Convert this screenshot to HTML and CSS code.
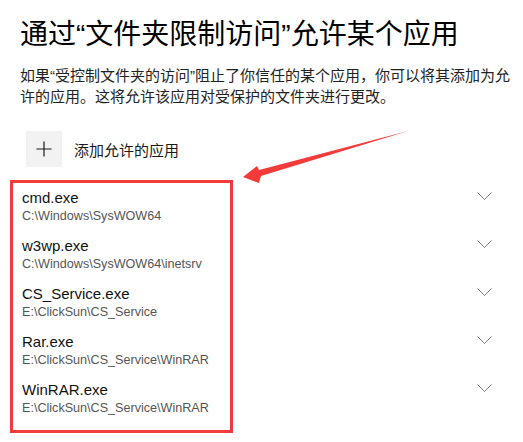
FILE: index.html
```html
<!DOCTYPE html>
<html lang="zh-CN">
<head>
    <meta charset="UTF-8">
    <title>允许的应用</title>
    <link rel="stylesheet" href="styles.css">
</head>
<body>
    <div id="page">
        <h1 class="title">通过“文件夹限制访问”允许某个应用</h1>
        <p class="desc">如果“受控制文件夹的访问”阻止了你信任的某个应用，你可以将其添加为允许的应用。这将允许该应用对受保护的文件夹进行更改。</p>

        <div class="add">
            <span class="add-btn">
                <svg width="16" height="16" viewBox="0 0 16 16">
                    <path d="M8 0.5V15.5M0.5 8H15.5" stroke="#1a1a1a" stroke-width="1.2" fill="none"/>
                </svg>
            </span>
            <span class="add-text">添加允许的应用</span>
        </div>

        <ul class="apps">
            <li>
                <div class="info">
                    <div class="name">cmd.exe</div>
                    <div class="path">C:\Windows\SysWOW64</div>
                </div>
                <svg class="chev" width="15" height="8" viewBox="0 0 15 8"><path d="M0.5 0.5L7.5 7.5L14.5 0.5"/></svg>
            </li>
            <li>
                <div class="info">
                    <div class="name">w3wp.exe</div>
                    <div class="path">C:\Windows\SysWOW64\inetsrv</div>
                </div>
                <svg class="chev" width="15" height="8" viewBox="0 0 15 8"><path d="M0.5 0.5L7.5 7.5L14.5 0.5"/></svg>
            </li>
            <li>
                <div class="info">
                    <div class="name">CS_Service.exe</div>
                    <div class="path">E:\ClickSun\CS_Service</div>
                </div>
                <svg class="chev" width="15" height="8" viewBox="0 0 15 8"><path d="M0.5 0.5L7.5 7.5L14.5 0.5"/></svg>
            </li>
            <li>
                <div class="info">
                    <div class="name">Rar.exe</div>
                    <div class="path">E:\ClickSun\CS_Service\WinRAR</div>
                </div>
                <svg class="chev" width="15" height="8" viewBox="0 0 15 8"><path d="M0.5 0.5L7.5 7.5L14.5 0.5"/></svg>
            </li>
            <li>
                <div class="info">
                    <div class="name">WinRAR.exe</div>
                    <div class="path">E:\ClickSun\CS_Service\WinRAR</div>
                </div>
                <svg class="chev" width="15" height="8" viewBox="0 0 15 8"><path d="M0.5 0.5L7.5 7.5L14.5 0.5"/></svg>
            </li>
        </ul>

        <!-- red marker around the list and the pointing arrow -->
        <div class="mark"></div>
        <svg class="arrow" width="523" height="442" viewBox="0 0 523 442">
            <polygon points="243,177 257,166 259,170 408,131 261,176 259,183" fill="#f43b3b"/>
        </svg>
    </div>
</body>
</html>
```

FILE: styles.css
```css
*{
    margin: 0;
    padding: 0;
}
ul{
    list-style: none;
}
body{
    background: #fff;
    font-family: "Liberation Sans", "Noto Sans CJK SC", sans-serif;
    color: #000;
    overflow: hidden;
}
#page{
    position: relative;
    width: 523px;
    height: 442px;
    padding: 17px 0 0 20px;
    box-sizing: border-box;
}
.title{
    font-size: 28px;
    line-height: 36px;
    font-weight: normal;
    white-space: nowrap;
}
.desc{
    margin-top: 12px;
    max-width: 498px;
    font-size: 15px;
    line-height: 21px;
    color: #222;
}
.add{
    display: flex;
    align-items: center;
    margin: 24px 0 0 6px;
}
.add-btn{
    width: 36px;
    height: 36px;
    background: #f2f2f2;
    display: flex;
    align-items: center;
    justify-content: center;
}
.add-text{
    margin-left: 12px;
    font-size: 15px;
    color: #1a1a1a;
}
.apps{
    margin: 14px 31px 0 0;
}
.apps li{
    display: flex;
    justify-content: space-between;
    align-items: flex-start;
    height: 48px;
    padding: 7px 0 0 2px;
    box-sizing: border-box;
}
.name{
    font-size: 15px;
    line-height: 20px;
    color: #111;
}
.path{
    font-size: 12.6px;
    line-height: 16px;
    color: #555;
}
.chev{
    margin-top: 4px;
    fill: none;
    stroke: #7a7a7a;
    stroke-width: 1;
}
.mark{
    position: absolute;
    left: 10px;
    top: 180px;
    width: 217px;
    height: 247px;
    border: 3px solid #f43b3b;
}
.arrow{
    position: absolute;
    left: 0;
    top: 0;
}
```
